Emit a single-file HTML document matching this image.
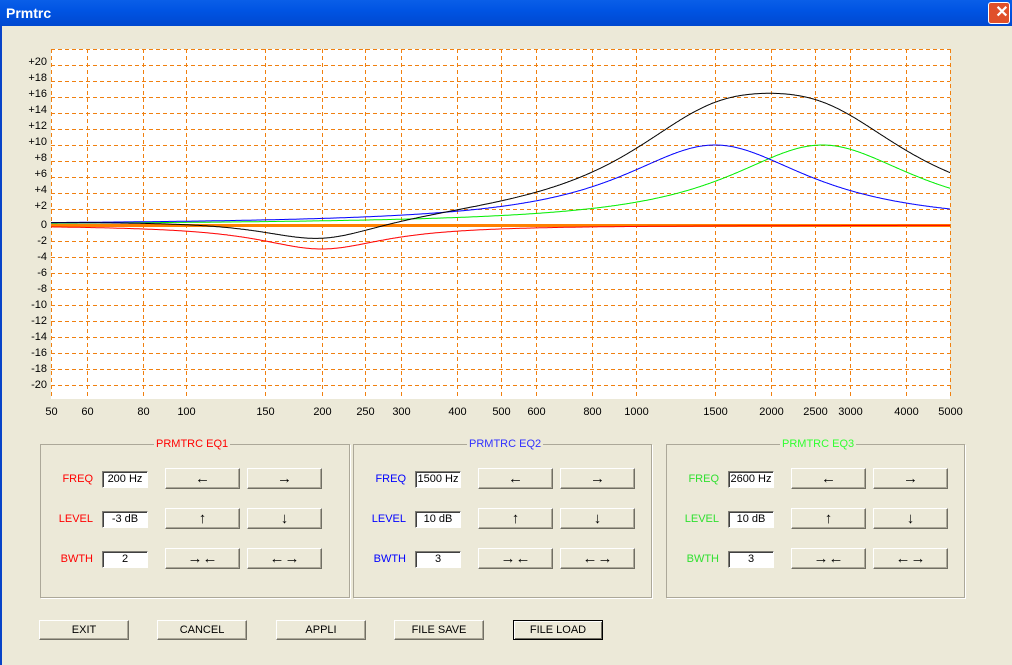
<!DOCTYPE html>
<html><head><style>
body{margin:0;width:1012px;height:665px;overflow:hidden;background:#ece9d8;font-family:"Liberation Sans",sans-serif;font-size:11px;position:relative}
.title{position:absolute;left:0;top:0;width:1012px;height:26px;background:linear-gradient(#0a5fe8,#0054e3 40%,#0048d0);color:#fff;font-weight:bold;font-size:14px;line-height:26px;text-indent:6px}
.close{position:absolute;right:2px;top:2px;width:20px;height:20px;background:#e0502a;border:1px solid #fff;border-radius:3px;color:#fff;font-size:16px;line-height:20px;text-align:center;font-weight:bold}
.lb{position:absolute;left:0;top:26px;width:2px;height:639px;background:#0843c8}
.grp{position:absolute;border:1px solid #aca899;box-shadow:1px 1px 0 #fff}
.gt{position:absolute;top:-7px;background:#ece9d8;padding:0 2px;font-size:11px}
.btn{position:absolute;width:73px;height:19px;background:#ece9d8;border:1px solid;border-color:#fff #716f64 #716f64 #fff;box-shadow:inset -1px -1px 0 #aca899;text-align:center;line-height:19px;font-size:15px}
.tb{position:absolute;width:44px;height:15px;background:#fff;border:1px solid;border-color:#7f7d75 #fff #fff #7f7d75;box-shadow:inset 1px 1px 0 #404040;text-align:center;line-height:15px;font-size:11px}
.lab{position:absolute;font-size:11px;text-align:right;width:50px}
.bb{position:absolute;top:620px;width:88px;height:18px;border:1px solid;border-color:#fff #716f64 #716f64 #fff;text-align:center;line-height:18px;font-size:11px;box-shadow:inset -1px -1px 0 #aca899}
</style></head><body>
<div class="title">Prmtrc<div class="close">✕</div></div>
<div class="lb"></div>
<svg id="g" style="position:absolute;left:0;top:0" width="1012" height="430"></svg>
<div id="ui"></div>
<div class="bb" style="left:39px">EXIT</div>
<div class="bb" style="left:157px">CANCEL</div>
<div class="bb" style="left:276px">APPLI</div>
<div class="bb" style="left:394px">FILE SAVE</div>
<div class="bb" style="left:513px;border:1px solid #000;box-shadow:inset 1px 1px 0 #fff,inset -1px -1px 0 #716f64">FILE LOAD</div>
<script>
var s='',X0=51,X1=950,Y0=49,Y1=399;
function fx(f){return X0+(X1-X0)*Math.log10(f/50)/2;}
function fy(d){return 225-8*d;}
s+='<rect x="51" y="49" width="899" height="350" fill="#fff"/>';
for(var y=49;y<=399;y+=16)s+='<line x1="51" x2="950" y1="'+(y+.5)+'" y2="'+(y+.5)+'" stroke="#f08010" stroke-dasharray="4,3"/>';
var fs=[50,60,80,100,150,200,250,300,400,500,600,800,1000,1500,2000,2500,3000,4000,5000];
fs.forEach(function(f){var x=Math.round(fx(f))+.5;s+='<line x1="'+x+'" x2="'+x+'" y1="49" y2="399" stroke="#f08010" stroke-dasharray="4,3"/>';
s+='<text x="'+x+'" y="415" text-anchor="middle" font-size="11" font-family="Liberation Sans">'+f+'</text>';});
for(var d=20;d>=-20;d-=2){s+='<text x="47" y="'+(fy(d/2*2)+(d>0?-2:1)+ (0) +2)+'" text-anchor="end" font-size="11" font-family="Liberation Sans">'+(d>0?'+':'')+d+'</text>';}
var eq=[[200,-3,1.7,'#ff0000'],[1500,10,1.15,'#0000ff'],[2600,10,1.15,'#00ee00']];
function g(e,f){var t=Math.log2(f/e[0])*e[2];return e[1]/(1+t*t);}
var paths=['','','',''];
for(var x=51;x<=950;x++){var f=50*Math.pow(10,2*(x-51)/899),sum=0;
eq.forEach(function(e,i){var v=g(e,f);sum+=v;paths[i]+=(x==51?'M':'L')+x+' '+fy(v).toFixed(1);});
paths[3]+=(x==51?'M':'L')+x+' '+fy(sum).toFixed(1);}
s+='<line x1="51" x2="950" y1="225.5" y2="225.5" stroke="#ff8000" stroke-width="3"/>';
s+='<path d="'+paths[0]+'" fill="none" stroke="#ff0000"/>';
s+='<path d="'+paths[2]+'" fill="none" stroke="#00ee00"/>';
s+='<path d="'+paths[1]+'" fill="none" stroke="#0000ff"/>';
s+='<path d="'+paths[3]+'" fill="none" stroke="#000"/>';
document.getElementById('g').innerHTML=s;
var u='',gs=[[40,'PRMTRC EQ1','#ff0000',['200 Hz','-3 dB','2'],'#ff0000'],[353,'PRMTRC EQ2','#3030ff',['1500 Hz','10 dB','3'],'#0000ff'],[666,'PRMTRC EQ3','#30ff30',['2600 Hz','10 dB','3'],'#30e030']];
var ar=[['←','→'],['↑','↓'],['→←','←→']],lb=['FREQ','LEVEL','BWTH'];
gs.forEach(function(q){var L=q[0];
u+='<div class="grp" style="left:'+L+'px;top:444px;width:'+(q[0]==40?308:297)+'px;height:152px"><div class="gt" style="left:'+(q[0]==40?113:113)+'px;color:'+q[2]+'">'+q[1]+'</div></div>';
for(var i=0;i<3;i++){var y=468+40*i;
u+='<div class="lab" style="left:'+(L+3)+'px;top:'+(y+5)+'px;color:'+q[4]+'">'+lb[i]+'</div>';
u+='<div class="tb" style="left:'+(L+62)+'px;top:'+(y+3)+'px">'+q[3][i]+'</div>';
u+='<div class="btn" style="left:'+(L+125)+'px;top:'+y+'px">'+ar[i][0]+'</div>';
u+='<div class="btn" style="left:'+(L+207)+'px;top:'+y+'px">'+ar[i][1]+'</div>';}});
document.getElementById('ui').innerHTML=u;
</script>
</body></html>
